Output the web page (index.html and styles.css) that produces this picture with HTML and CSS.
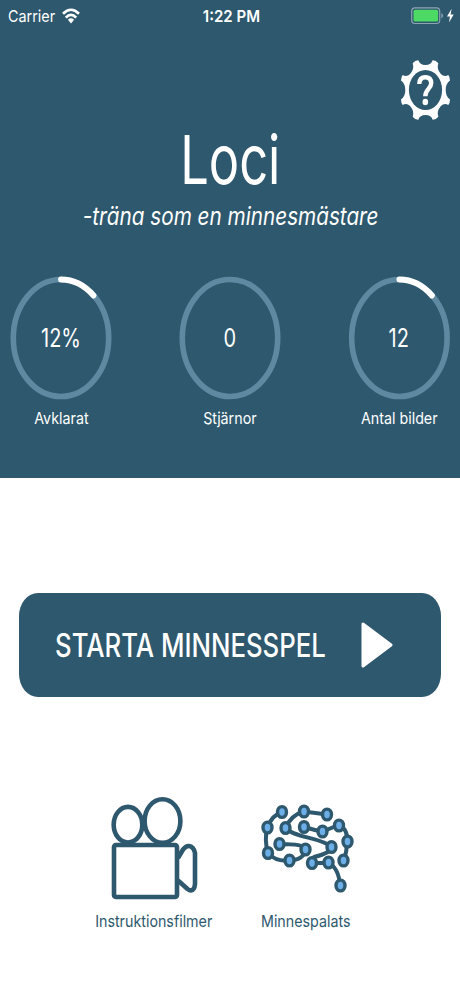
FILE: index.html
```html
<!DOCTYPE html>
<html lang="sv">
<head>
<meta charset="utf-8">
<title>Loci</title>
<link rel="stylesheet" href="styles.css">
</head>
<body>
<main class="screen">
  <header class="hero">
    <div class="status">
      <div class="status-left">
        <span class="t carrier">Carrier</span>
        <svg class="wifi" width="18" height="16" viewBox="0 0 18 16"><g fill="none" stroke="#fff" stroke-width="2.7"><path d="M1 5.8Q9-2.3 17 5.8"/><path d="M3.8 9.6Q9 4.2 14.2 9.6"/></g><path d="M5.9 11.7Q9 8.8 12.1 11.7L9 15.4Z" fill="#fff"/></svg>
      </div>
      <span class="t clock">1:22 PM</span>
      <svg class="battery" width="44" height="18" viewBox="0 0 44 18"><rect x=".7" y=".9" width="28" height="15.6" rx="3.2" fill="none" stroke="#8da5b3" stroke-width="1.2"/><rect x="2.5" y="2.8" width="24.6" height="11.8" rx="1.5" fill="#4cd964"/><path d="M30.3 6Q32 7 32 8.7T30.3 11.4Z" fill="#8da5b3"/><path d="M40.6 1.8L36 9.5H39L38 15.6L42.7 7.4H39.6Z" fill="#fff"/></svg>
    </div>
    <div class="toolbar">
      <svg class="gear" width="50" height="62" viewBox="0 0 50 62"><path fill="#fff" d="M11.700 4.300Q14 1.200 17.300 1.300C18.500 4.500 20.500 6 24.500 6C28.500 6 30.500 4.500 31.700 1.300Q35 1.200 37.300 4.300C36 8.500 37 11.500 39.300 14.300C41.700 17.200 44.500 17.800 47.300 16Q49 18 49 21.500C46 23.500 44.700 27 44.700 31C44.700 35 46 38.500 49 40.500Q49 44 47.300 46C44.500 44.200 41.700 44.800 39.300 47.700C37 50.500 36 53.500 37.300 57.700Q35 60.800 31.700 60.700C30.500 57.500 28.500 56 24.500 56C20.500 56 18.500 57.500 17.300 60.700Q14 60.800 11.700 57.700C13 53.500 12 50.500 9.700 47.700C7.300 44.800 4.500 44.200 1.700 46Q0 44 0 40.500C3 38.500 4.300 35 4.300 31C4.300 27 3 23.500 0 21.500Q0 18 1.700 16C4.500 17.800 7.300 17.200 9.700 14.300C12 11.500 13 8.500 11.700 4.300Z"/><ellipse cx="24.500" cy="31" rx="16.600" ry="20" fill="#2e586d"/><path d="M18.300 25Q18.400 18.300 24.300 18.300Q30.200 18.300 30.200 24.300C30.200 29.500 24.300 30 24.300 37.300" fill="none" stroke="#fff" stroke-width="4.400"/><ellipse cx="24.300" cy="43" rx="2.800" ry="3.300" fill="#fff"/></svg>
    </div>
    <h1 class="t title">Loci</h1>
    <p class="t tagline">-träna som en minnesmästare</p>
    <section class="stats">
      <div class="stat">
        <div class="ring"><svg width="102" height="124" viewBox="0 0 102 124"><ellipse class="track" cx="51" cy="62" rx="47.700" ry="58.500"/><path class="arc" d="M51 3.500A47.700 58.500 0 0 1 83.500 19.500"/></svg><span class="t value">12%</span></div>
        <span class="t label">Avklarat</span>
      </div>
      <div class="stat">
        <div class="ring"><svg width="102" height="124" viewBox="0 0 102 124"><ellipse class="track" cx="51" cy="62" rx="47.700" ry="58.500"/></svg><span class="t value">0</span></div>
        <span class="t label">Stjärnor</span>
      </div>
      <div class="stat">
        <div class="ring"><svg width="102" height="124" viewBox="0 0 102 124"><ellipse class="track" cx="51.400" cy="62" rx="47.700" ry="58.500"/><path class="arc" d="M51.400 3.500A47.700 58.500 0 0 1 83.900 19.500"/></svg><span class="t value">12</span></div>
        <span class="t label">Antal bilder</span>
      </div>
    </section>
  </header>
  <button class="start">
    <span class="start-slot"><span class="t start-text">STARTA MINNESSPEL</span></span>
    <svg class="play" width="32" height="46" viewBox="0 0 32 46"><path d="M2 2V44L30 23Z" fill="#fff" stroke="#fff" stroke-width="3" stroke-linejoin="round"/></svg>
  </button>
  <nav class="links">
    <a class="link link-film">
      <svg width="90" height="106" viewBox="0 0 90 106"><g fill="none" stroke="#2e586d" stroke-width="4.600" stroke-linejoin="round"><ellipse cx="19" cy="28.700" rx="14.300" ry="17.800"/><ellipse cx="53.500" cy="25" rx="17.900" ry="21.800"/><rect x="5" y="49" width="63" height="52" rx="2"/><path d="M69 62L74 53.500Q77 49.800 80 50Q84.500 50.500 86 57V88Q85.500 94 82 94.400Q80.500 94.500 78.500 93L69 84.500"/></g></svg>
      <span class="t caption">Instruktionsfilmer</span>
    </a>
    <a class="link link-palace">
      <svg width="96" height="92" viewBox="0 0 96 92"><g fill="none" stroke="#2e586d" stroke-width="4"><path d="M22 10Q12 13 7.500 25.500Q4 38 8 51Q16 60 29 58.500Q44 58 45.500 47.500Q44 41 19 42.500"/><path d="M67 12.500L44 9.500Q31 13 25.500 26C34 36 61 35 71.500 45Q71 51 54 55Q50 58 51.500 61H68.500Q79 66 80 84"/><path d="M44 25Q54 28 62.500 29.500L79 23Q88 27 87 39.500Q87 50 83.500 59"/></g><g class="nodes"><ellipse cx="22" cy="10" rx="4.500" ry="5.400"/><ellipse cx="44" cy="9.500" rx="4.500" ry="5.400"/><ellipse cx="67" cy="12.500" rx="4.500" ry="5.400"/><ellipse cx="7.500" cy="25.500" rx="4.500" ry="5.400"/><ellipse cx="25.500" cy="26" rx="4.500" ry="5.400"/><ellipse cx="44" cy="25" rx="4.500" ry="5.400"/><ellipse cx="62.500" cy="29.500" rx="4.500" ry="5.400"/><ellipse cx="79" cy="23.500" rx="4.500" ry="5.400"/><ellipse cx="87.500" cy="39.500" rx="4.500" ry="5.400"/><ellipse cx="19.500" cy="42" rx="4.500" ry="5.400"/><ellipse cx="45.500" cy="47.500" rx="4.500" ry="5.400"/><ellipse cx="71.500" cy="45" rx="4.500" ry="5.400"/><ellipse cx="8" cy="51" rx="4.500" ry="5.400"/><ellipse cx="29.500" cy="58.500" rx="4.500" ry="5.400"/><ellipse cx="52" cy="61" rx="4.500" ry="5.400"/><ellipse cx="68.500" cy="60.500" rx="4.500" ry="5.400"/><ellipse cx="83.500" cy="58.500" rx="4.500" ry="5.400"/><ellipse cx="80.500" cy="83.500" rx="4.500" ry="5.400"/></g></svg>
      <span class="t caption">Minnespalats</span>
    </a>
  </nav>
</main>
</body>
</html>
```

FILE: styles.css
```css
* { box-sizing: border-box; }
body {
  margin: 0;
  background: #fff;
  font-family: Inter, "Liberation Sans", sans-serif;
  color: #fff;
}
svg { display: block; flex: none; }
.t {
  display: block;
  white-space: nowrap;
  transform: scaleX(var(--sx, .8));
}
.screen { width: 460px; height: 996px; overflow: hidden; display: flex; flex-direction: column; }

.hero { height: 477.5px; flex: none; background: #2e586d; display: flex; flex-direction: column; }
.status {
  height: 32px;
  flex: none;
  display: grid;
  grid-template-columns: 1fr auto 1fr;
  align-items: center;
  padding: 0 5px 0 8px;
  font-size: 16.5px;
  line-height: 20px;
}
.status-left { display: flex; align-items: center; }
.carrier { --sx: .87; width: 54px; transform-origin: left; }
.wifi { margin-top: -1px; }
.clock { --sx: .91; font-weight: 600; }
.battery { justify-self: end; }
.toolbar { height: 90px; flex: none; display: flex; justify-content: flex-end; padding: 27px 9px 0 0; }

.title { --sx: .745; margin: -1px 0 0; align-self: center; font-size: 68px; font-weight: 400; line-height: 76px; }
.tagline { --sx: .828; margin: 4px 0 0 2px; align-self: center; font-size: 25px; font-style: italic; line-height: 30px; }
.stats { display: flex; justify-content: space-between; padding: 0 10px; margin-top: 45px; }
.stat { width: 102px; display: flex; flex-direction: column; align-items: center; }
.ring { display: grid; place-items: center; height: 124px; }
.ring > * { grid-area: 1 / 1; }
.track { fill: none; stroke: #5f89a0; stroke-width: 5.600; }
.arc { fill: none; stroke: #fff; stroke-width: 5.800; stroke-linecap: round; }
.value { font-size: 25px; line-height: 30px; }
.label { --sx: .865; font-size: 16.500px; line-height: 22px; margin-top: 7px; }

.start {
  flex: none;
  display: flex;
  align-items: center;
  width: 422px;
  height: 104px;
  margin: 115.5px 0 0 19px;
  padding: 0 0 0 36px;
  border: 0;
  border-radius: 19px / 23px;
  background: #2e586d;
  color: #fff;
  font: inherit;
}
.start-slot { width: 306px; }
.start-text { --sx: .805; width: max-content; transform-origin: left; font-size: 32px; font-weight: 500; }

.links { display: flex; margin-top: 98.5px; padding-left: 94px; gap: 33px; color: #2e586d; }
.link { display: flex; flex-direction: column; align-items: center; width: 119px; }
.link svg { margin-bottom: 8px; }
.link-palace svg { margin: 6px 0 16px 4px; }
.caption { --sx: .865; font-size: 16.500px; line-height: 22px; }
.nodes { fill: #6caee8; stroke: #2e586d; stroke-width: 3.400; }
```
